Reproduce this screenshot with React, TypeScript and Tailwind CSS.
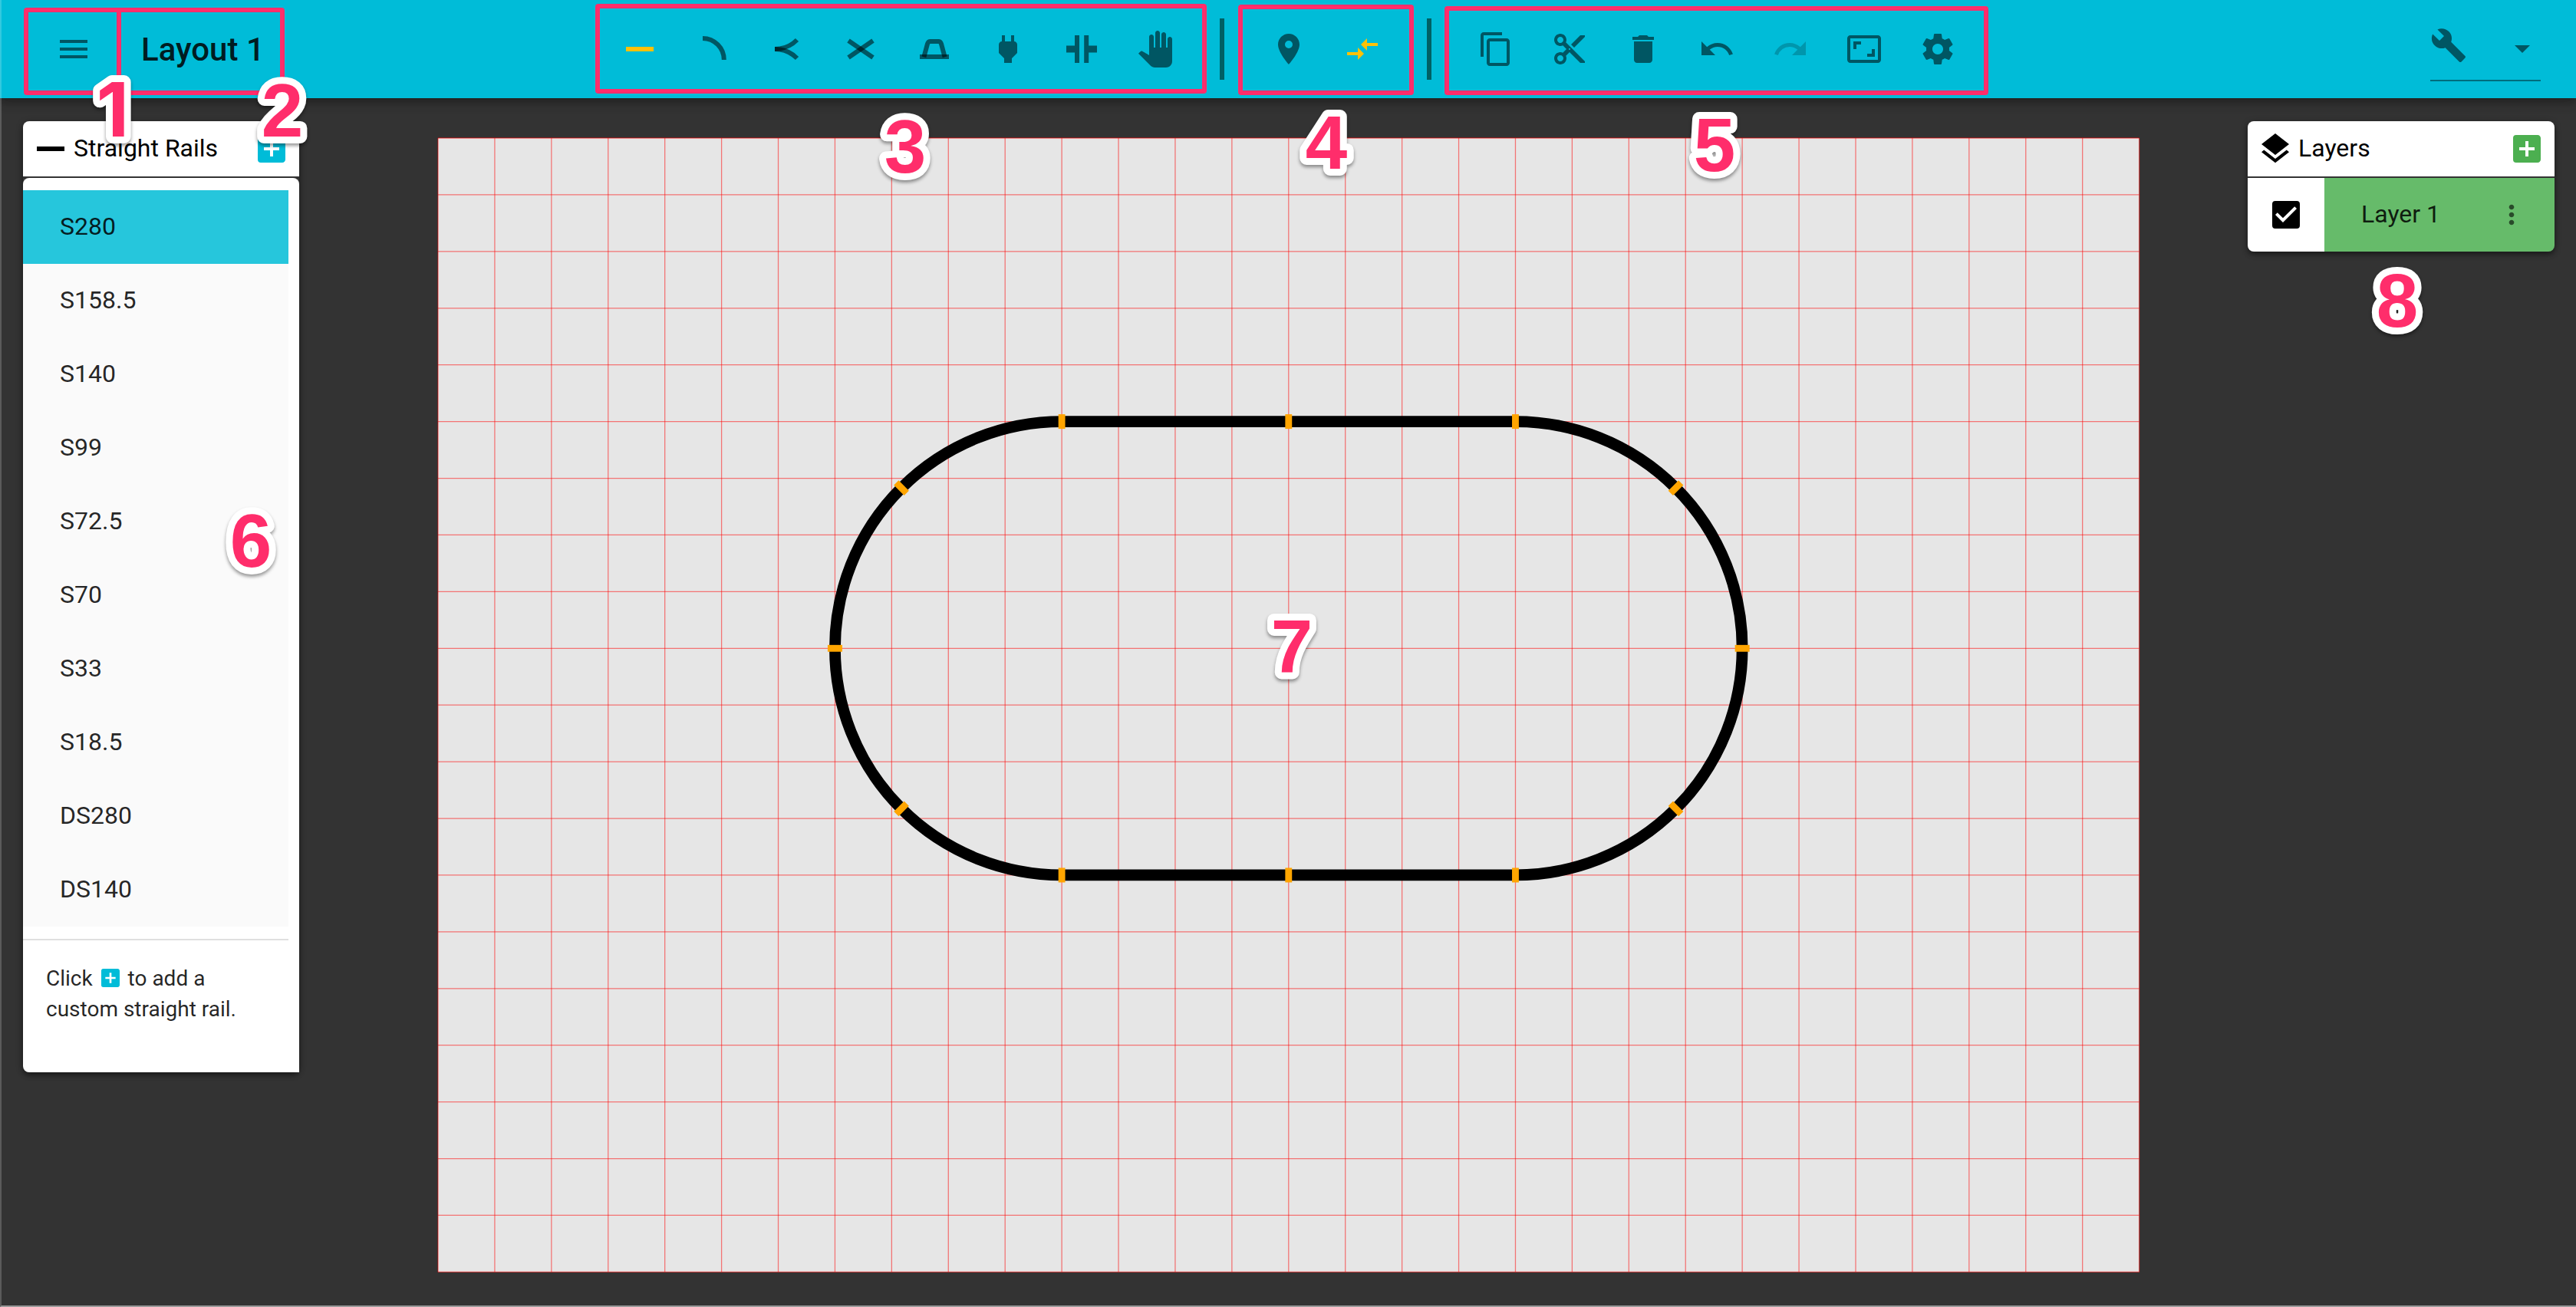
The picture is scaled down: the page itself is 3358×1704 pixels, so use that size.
import type { ReactNode } from "react";
import {
  MdMenu, MdPlace, MdCompareArrows, MdContentCopy, MdContentCut, MdDelete, MdUndo, MdRedo,
  MdAspectRatio, MdBuild, MdArrowDropDown, MdAddBox, MdLayers, MdMoreVert, MdPanTool, MdPower,
} from "react-icons/md";

const rails = ["S280", "S158.5", "S140", "S99", "S72.5", "S70", "S33", "S18.5", "DS280", "DS140"];

function Glyph({ children, className = "size-12" }: { children: ReactNode; className?: string }) {
  return (
    <svg viewBox="0 0 24 24" className={className} fill="none" stroke="currentColor" strokeWidth="3" aria-hidden="true">
      {children}
    </svg>
  );
}

const StraightIcon = () => <Glyph><path d="M3 12H21" /></Glyph>;
const CurveIcon = () => <Glyph><path d="M5 5A13.9 14 0 0 1 18.9 19" /></Glyph>;
const TurnoutIcon = () => (
  <Glyph>
    <path d="M4 12A20.5 20.5 0 0 0 18.5 6" />
    <path d="M4 12A20.5 20.5 0 0 1 18.5 18" />
  </Glyph>
);
const CrossingIcon = () => (
  <Glyph>
    <path d="M4 6.5L20 17.5" />
    <path d="M4 17.5L20 6.5" />
  </Glyph>
);
const StructureIcon = () => (
  <Glyph>
    <path d="M2.5 17H21.5" />
    <path d="M5.2 17.2L7.5 8.6Q8 7 9.4 7H14.6Q16 7 16.5 8.6L18.8 17.2" />
  </Glyph>
);
const GapJoinerIcon = () => (
  <Glyph>
    <path fill="currentColor" stroke="none" d="M2 9.7H7.5V3H10.5V21H7.5V14.3H2ZM22 9.7H16.6V3H13.6V21H16.6V14.3H22Z" />
  </Glyph>
);
const GearIcon = () => (
  <Glyph>
    <path
      fill="currentColor"
      stroke="none"
      d="M19.43 12.98c.04-.32.07-.64.07-.98s-.03-.66-.07-.98l2.11-1.65c.19-.15.24-.42.12-.64l-2-3.46c-.12-.22-.39-.3-.61-.22l-2.49 1c-.52-.4-1.08-.73-1.69-.98l-.38-2.65C14.46 2.18 14.25 2 14 2h-4c-.25 0-.46.18-.49.42l-.38 2.65c-.61.25-1.17.59-1.69.98l-2.49-1c-.23-.09-.49 0-.61.22l-2 3.46c-.13.22-.07.49.12.64l2.11 1.65c-.04.32-.07.65-.07.98s.03.66.07.98l-2.11 1.65c-.19.15-.24.42-.12.64l2 3.46c.12.22.39.3.61.22l2.49-1c.52.4 1.08.73 1.69.98l.38 2.65c.03.24.24.42.49.42h4c.25 0 .46-.18.49-.42l.38-2.65c.61-.25 1.17-.59 1.69-.98l2.49 1c.23.09.49 0 .61-.22l2-3.46c.12-.22.07-.49-.12-.64l-2.11-1.65zM12 15.5c-1.93 0-3.5-1.57-3.5-3.5s1.57-3.5 3.5-3.5 3.5 1.57 3.5 3.5-1.57 3.5-3.5 3.5z"
    />
  </Glyph>
);

function Tool({ label, active, disabled, children }: { label: string; active?: boolean; disabled?: boolean; children: ReactNode }) {
  return (
    <button
      type="button"
      aria-label={label}
      aria-pressed={active}
      disabled={disabled}
      className={`flex size-24 items-center justify-center ${
        active ? "text-[#ffc107]" : disabled ? "text-black/20" : "text-black/54"
      }`}
    >
      {children}
    </button>
  );
}

/* Pink outline around a group of controls. */
const Frame = ({ className }: { className: string }) => (
  <div className={`pointer-events-none absolute rounded-sm border-6 border-[#ff2d6b] ${className}`} />
);

/* Numbered marker with a white halo. */
const Callout = ({
  n,
  className,
  font = "font-['Liberation_Sans',sans-serif]",
}: {
  n: number;
  className: string;
  font?: string;
}) => (
  <svg
    viewBox="0 0 80 112"
    className={`pointer-events-none absolute z-20 h-28 w-20 overflow-visible drop-shadow-[0_3px_2px_rgba(0,0,0,0.4)] ${className}`}
  >
    <text
      x="40"
      y="90"
      textAnchor="middle"
      className={`fill-[#ff2d6b] stroke-white text-[98px] font-bold ${font}`}
      strokeWidth="18"
      strokeLinejoin="round"
      paintOrder="stroke"
    >
      {n}
    </text>
  </svg>
);

const Separator = () => <div className="mx-9 h-20 w-1.5 bg-[#006064]" />;

function TopBar() {
  return (
    <header className="relative z-10 flex h-32 items-center bg-[#00bcd8] pr-[46px] pl-12 shadow-[0_4px_8px_-2px_rgba(0,0,0,0.2),0_8px_10px_rgba(0,0,0,0.14),0_2px_20px_rgba(0,0,0,0.12)]">
      <div className="relative flex flex-1 items-center self-stretch">
        <Tool label="Menu"><MdMenu className="size-12" /></Tool>
        <h1 className="ml-10 text-[42px] font-medium text-black/87">Layout 1</h1>
        <Frame className="top-[10px] bottom-1 -left-[17px] w-[127px]" />
        <Frame className="top-[10px] bottom-1 left-[104px] w-[219px]" />
        <Callout n={1} className="top-[88px] left-[59px]" font="font-[Inter,sans-serif]" />
        <Callout n={2} className="top-[88px] left-[280px]" />
      </div>

      <nav className="flex items-center self-stretch" aria-label="Tools">
        <div className="relative flex items-center self-stretch">
          <Tool label="Straight rails" active><StraightIcon /></Tool>
          <Tool label="Curve rails"><CurveIcon /></Tool>
          <Tool label="Turnouts"><TurnoutIcon /></Tool>
          <Tool label="Special rails"><CrossingIcon /></Tool>
          <Tool label="Structures"><StructureIcon /></Tool>
          <Tool label="Feeders"><MdPower className="size-12" /></Tool>
          <Tool label="Gap joiners"><GapJoinerIcon /></Tool>
          <Tool label="Pan"><MdPanTool className="size-12" /></Tool>
          <Frame className="top-[5px] -right-[19px] bottom-[6px] -left-[10px]" />
          <Callout n={3} className="top-[135px] left-[354px]" />
        </div>
        <Separator />
        <div className="relative flex items-center self-stretch">
          <Tool label="Measure"><MdPlace className="size-12" /></Tool>
          <Tool label="Auto connect" active><MdCompareArrows className="size-12" /></Tool>
          <Frame className="top-[6px] -right-[19px] bottom-1 -left-[18px]" />
          <Callout n={4} className="top-[130px] left-[57px]" />
        </div>
        <Separator />
        <div className="relative flex items-center self-stretch">
          <Tool label="Copy"><MdContentCopy className="size-12" /></Tool>
          <Tool label="Cut"><MdContentCut className="size-12" /></Tool>
          <Tool label="Delete"><MdDelete className="size-12" /></Tool>
          <Tool label="Undo"><MdUndo className="size-12" /></Tool>
          <Tool label="Redo" disabled><MdRedo className="size-12" /></Tool>
          <Tool label="Reset view"><MdAspectRatio className="size-12" /></Tool>
          <Tool label="Settings"><GearIcon /></Tool>
          <Frame className="top-2 -right-[18px] bottom-1 -left-[19px]" />
          <Callout n={5} className="top-[133px] left-[293px]" />
        </div>
      </nav>

      <div className="flex flex-1 justify-end">
        <div className="relative flex h-[84px] w-36 items-center justify-between border-b-2 border-black/42 text-black/54">
          <MdBuild className="mb-2 size-12" />
          <MdArrowDropDown className="size-12" />
          <select aria-label="Mode" className="absolute inset-0 cursor-pointer appearance-none bg-transparent">
            <option value="build" aria-label="Build" />
          </select>
        </div>
      </div>
    </header>
  );
}

function PanelTitle({ icon, title, addLabel, addClass }: { icon: ReactNode; title: string; addLabel: string; addClass: string }) {
  return (
    <div className="flex h-18 items-center rounded-t-lg bg-white px-3 text-black">
      {icon}
      <h2 className="ml-1.5 flex-1 pb-0.5 text-[32px]">{title}</h2>
      <button type="button" aria-label={addLabel} className={addClass}>
        <MdAddBox className="size-12" />
      </button>
    </div>
  );
}

const panelShadow = "shadow-[0_2px_10px_rgba(0,0,0,0.3),0_4px_6px_rgba(0,0,0,0.3)]";

function Palette() {
  return (
    <section className={`relative flex w-90 flex-col gap-0.5 rounded-lg ${panelShadow}`}>
      <PanelTitle icon={<StraightIcon />} title="Straight Rails" addLabel="Add straight rail" addClass="text-[#00bcd8]" />
      <div className="rounded-t-lg rounded-bl-lg bg-white pt-4 pr-3.5">
        <ul className="border-b-2 border-[#e0e0e0] pb-4">
          {rails.map((name, i) => (
            <li key={name}>
              <button
                type="button"
                className={`h-24 w-full pb-0.5 pl-12 text-left text-[32px] text-black/87 ${i === 0 ? "bg-[#26c6dc]" : "bg-[#fafafa]"}`}
              >
                {name}
              </button>
            </li>
          ))}
        </ul>
        <p className="px-[30px] pt-[30px] pb-[62px] text-[28px] leading-10 text-black/87">
          Click <MdAddBox className="inline-block size-8 align-[-6px] text-[#00bcd8]" /> to add a<br />
          custom straight rail.
        </p>
      </div>
      <Callout n={6} className="top-[491px] left-[257px]" />
    </section>
  );
}

function LayerPanel() {
  return (
    <section className={`relative flex w-100 flex-col gap-0.5 rounded-lg ${panelShadow}`}>
      <PanelTitle icon={<MdLayers className="size-12" />} title="Layers" addLabel="Add layer" addClass="text-[#4caf50]" />
      <div className="flex h-24 overflow-hidden rounded-b-lg">
        <div className="flex w-25 items-center justify-center bg-white">
          <label className="relative flex size-9">
            <input type="checkbox" defaultChecked aria-label="Show Layer 1" className="peer size-9 appearance-none rounded-sm border-4 border-black checked:bg-black" />
            <svg viewBox="0 0 18 18" className="pointer-events-none absolute inset-0 hidden size-9 peer-checked:block" fill="white">
              <path d="M7 14L2 9L3.41 7.59L7 11.17L14.59 3.58L16 5Z" />
            </svg>
          </label>
        </div>
        <div className="flex flex-1 items-center bg-[#66bb6a] pr-9 pl-12">
          <span className="flex-1 pb-0.5 text-[32px] text-black/87">Layer 1</span>
          <button type="button" aria-label="Layer 1 menu" className="text-black/60">
            <MdMoreVert className="size-10" />
          </button>
        </div>
      </div>
      <Callout n={8} className="top-[178px] left-[155px]" />
    </section>
  );
}

/* Board units are millimetres: 2100 x 1400 with a 70 mm grid. */
const joints: [number, number, number][] = [
  [770, 350, 0], [1050, 350, 0], [1330, 350, 0],
  [770, 910, 0], [1050, 910, 0], [1330, 910, 0],
  [490, 630, 90], [1610, 630, 90],
  [572, 432, -45], [572, 828, 45], [1528, 432, 45], [1528, 828, -45],
];

function Board() {
  return (
    <main className="relative mt-[22px] w-[67.2%]">
      <svg viewBox="0 0 2100 1400" className="block h-auto w-full overflow-visible" role="img" aria-label="Oval track layout">
        <rect width="2100" height="1400" fill="#e6e6e6" />
        <g stroke="#ff0000" strokeOpacity="0.5" strokeWidth="1.2">
          {Array.from({ length: 31 }, (_, i) => <path key={`v${i}`} d={`M${i * 70} 0V1400`} />)}
          {Array.from({ length: 21 }, (_, i) => <path key={`h${i}`} d={`M0 ${i * 70}H2100`} />)}
        </g>
        <path
          d="M770 350H1330A280 280 0 0 1 1330 910H770A280 280 0 0 1 770 350Z"
          fill="none"
          stroke="#000"
          strokeWidth="14"
        />
        {joints.map(([x, y, a]) => (
          <rect key={`${x}-${y}`} x={-4.2} y={-9} width="8.4" height="18" fill="#ffa500" transform={`translate(${x} ${y}) rotate(${a})`} />
        ))}
      </svg>
      <Callout n={7} className="top-[calc(50%-132px)] left-[calc(50%-36px)]" />
    </main>
  );
}

export default function App() {
  return (
    <div className="relative flex min-h-screen flex-col bg-[#333] font-[Roboto,sans-serif]">
      <TopBar />
      <div className="flex flex-1 items-start pt-[30px] pr-7 pl-[30px]">
        <div className="flex-1"><Palette /></div>
        <Board />
        <div className="flex flex-1 justify-end"><LayerPanel /></div>
      </div>
      <div className="pointer-events-none absolute inset-0 z-30 border-b-2 border-l-2 border-b-[#999] border-l-white/20" />
    </div>
  );
}
